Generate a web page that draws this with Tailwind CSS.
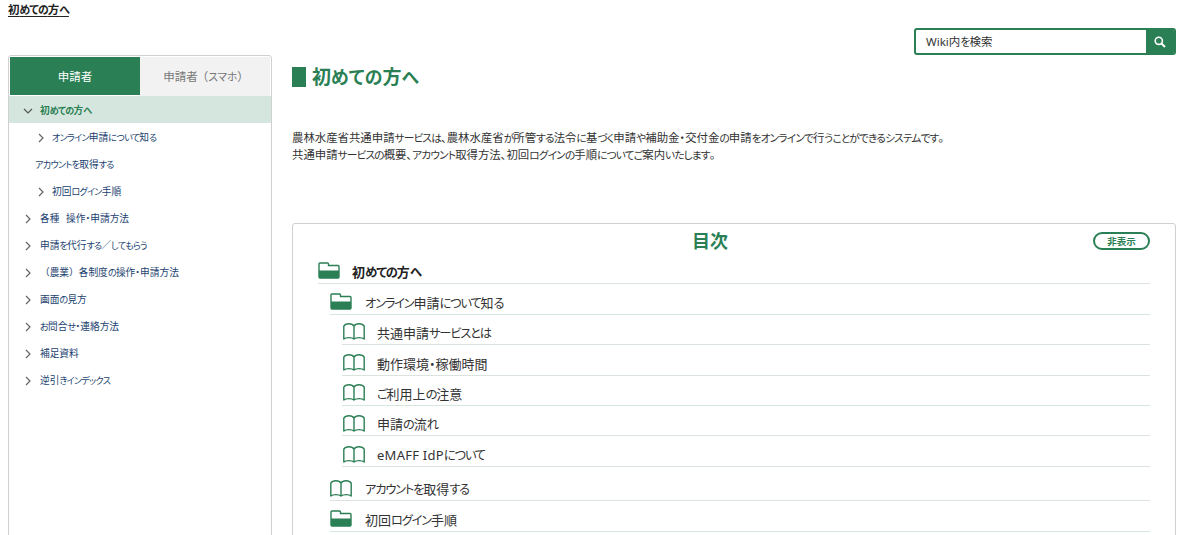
<!DOCTYPE html>
<html lang="ja">

<head>
  <meta charset="UTF-8">
  <meta name="viewport" content="width=device-width, initial-scale=1.0">
  <title>初めての方へ</title>
  <script src="https://cdn.jsdelivr.net/npm/@tailwindcss/browser@4"></script>
</head>

<!-- i = kana run, set smaller and tighter than the kanji -->
<body class="h-[535px] overflow-hidden bg-white font-['Noto_Sans_CJK_JP',sans-serif] text-[#333] [font-feature-settings:'palt'] [&_i]:text-[0.94em] [&_i]:tracking-[-0.08em] [&_i]:not-italic">

  <!-- Icons -->
  <svg class="hidden">
    <symbol id="folder" viewBox="0 0 22 17">
      <path d="M1 15V2a1 1 0 0 1 1-1h7.5a1 1 0 0 1 1 1v1.5H20a1 1 0 0 1 1 1V15a1 1 0 0 1-1 1H2a1 1 0 0 1-1-1z" fill="#fff" stroke="#2a7f54" stroke-width="1.4" />
      <path d="M1 8.500h20V15a1 1 0 0 1-1 1H2a1 1 0 0 1-1-1z" fill="#2a7f54" />
    </symbol>
    <symbol id="book" viewBox="0 0 22 17">
      <path d="M11 3.200C9.300-.1 2.700-.1.8 3.200V16c2.200-1.900 8-1.900 10.200 0c2.200-1.900 8-1.900 10.200 0V3.200C19.300-.1 12.700-.1 11 3.200V16" fill="none" stroke="#2a7f54" stroke-width="1.4" stroke-linejoin="round" />
    </symbol>
    <symbol id="right" viewBox="0 0 6 10">
      <path d="M1 1l4 4-4 4" fill="none" stroke="#666" stroke-width="1.200" />
    </symbol>
  </svg>

  <a class="ml-2 block h-[28px] w-fit text-[11.5px] leading-[19px] font-bold text-[#222] underline underline-offset-2">初<i>めての</i>方<i>へ</i></a>

  <!-- Search -->
  <div class="mr-6 ml-auto flex h-[27px] w-[262px] overflow-hidden rounded-[3px] border-2 border-[#2a7f54]">
    <div class="flex-1 pl-2.5 font-['Noto_Sans','Noto_Sans_CJK_JP',sans-serif] text-[11.5px] leading-[23px]">Wiki内<i>を</i>検索</div>
    <div class="flex w-7 items-center justify-center bg-[#2a7f54]">
      <svg class="size-3" viewBox="0 0 12 12" fill="none" stroke="#fff" stroke-width="1.600">
        <circle cx="4.800" cy="4.800" r="3.600" />
        <path d="M7.500 7.500L11 11" stroke-width="2" />
      </svg>
    </div>
  </div>

  <div class="flex pr-6 pl-2">
    <!-- Side menu -->
    <nav class="h-[500px] w-[264px] shrink-0 rounded-t-[3px] border border-[#d0d0d0] text-[9.7px] leading-[27px] text-[#1b3f70]">
      <div class="flex h-10 p-px pb-0 text-[11.5px] leading-[38px]">
        <div class="h-[38px] w-[130px] bg-[#2a7f54] text-center text-white">申請者</div>
        <div class="flex-1 bg-[#f2f2f2] pr-1.5 text-center whitespace-nowrap text-[#777]">申請者<span class="[font-feature-settings:normal] -ml-px">（</span><i class="tracking-[-0.02em]!">スマホ</i><span class="[font-feature-settings:normal] -mr-2">）</span></div>
      </div>
      <ul class="*:flex *:h-[27px] *:items-center *:pt-0.5">
        <li class="bg-[#d5e6de] pl-3.5 font-bold text-[#2a7f54]">
          <svg class="mr-[7px] h-[6px] w-2.5" viewBox="0 0 10 6"><path d="M1 1l4 4 4-4" fill="none" stroke="#555" stroke-width="1.200" /></svg><span>初<i>めての</i>方<i>へ</i></span>
        </li>
        <li class="pl-[29px]"><svg class="mr-2 h-2.5 w-1.5"><use href="#right" /></svg><span><i>オンライン</i>申請<i>について</i>知<i>る</i></span></li>
        <li class="pl-[26px]"><span><i>アカウントを</i>取得<i>する</i></span></li>
        <li class="pl-[29px]"><svg class="mr-2 h-2.5 w-1.5"><use href="#right" /></svg><span>初回<i>ログイン</i>手順</span></li>
        <li class="pl-4"><svg class="mr-[9px] h-2.5 w-1.5"><use href="#right" /></svg><span>各種<span class="-mr-[3px]">　</span>操作・申請方法</span></li>
        <li class="pl-4"><svg class="mr-[9px] h-2.5 w-1.5"><use href="#right" /></svg><span>申請<i>を</i>代行<i>する</i>／<i>してもらう</i></span></li>
        <li class="pl-4"><svg class="mr-[9px] h-2.5 w-1.5"><use href="#right" /></svg><span class="[font-feature-settings:normal]">（農業）</span><span>各制度<i>の</i>操作・申請方法</span></li>
        <li class="pl-4"><svg class="mr-[9px] h-2.5 w-1.5"><use href="#right" /></svg><span>画面<i>の</i>見方</span></li>
        <li class="pl-4"><svg class="mr-[9px] h-2.5 w-1.5"><use href="#right" /></svg><span><i>お</i>問合<i>せ</i>・連絡方法</span></li>
        <li class="pl-4"><svg class="mr-[9px] h-2.5 w-1.5"><use href="#right" /></svg><span>補足資料</span></li>
        <li class="pl-4"><svg class="mr-[9px] h-2.5 w-1.5"><use href="#right" /></svg><span>逆引<i>きインデックス</i></span></li>
      </ul>
    </nav>

    <main class="ml-5 flex-1 pt-3">
      <h1 class="flex h-5 items-center text-[19px] font-bold text-[#2a7f54] [&_i]:tracking-[0.01em]">
        <span class="mr-1.5 h-5 w-3.5 bg-[#2a7f54]"></span><span class="-mt-0.5">初<i>めての</i>方<i>へ</i></span>
      </h1>
      <p class="mt-[42px] h-[94px] text-[11.4px] leading-[17px] whitespace-nowrap [&_i]:tracking-[-0.1em]">
        <span>農林水産省共通申請<i>サービスは</i>、農林水産省<i>が</i>所管<i>する</i>法令<i>に</i>基<i>づく</i>申請<i>や</i>補助金・交付金<i>の</i>申請<i>をオンラインで</i>行<i>うことができるシステムです</i>。</span><br>
        <span>共通申請<i>サービスの</i>概要、<i>アカウント</i>取得方法、初回<i>ログインの</i>手順<i>についてご</i>案内<i>いたします</i>。</span>
      </p>

      <!-- Table of contents -->
      <section class="h-[330px] rounded-[3px] border border-[#d0d0d0] pr-[25px] pl-[25px]">
        <div class="relative flex h-[29px] items-center justify-center pt-1">
          <h2 class="mr-12 text-[18px] font-bold text-[#2a7f54]">目次</h2>
          <button class="absolute top-2 right-0 h-[18px] w-[57px] rounded-full border-2 border-[#2a7f54] text-[9.5px] leading-[13px] font-bold text-[#2a7f54]">非表示</button>
        </div>
        <ul class="text-[13px] leading-[20px] *:flex *:items-end *:border-b [&_i]:tracking-[-0.095em] [&_span]:mb-px">
          <li class="h-[31px] border-[#dbe3df] font-bold text-[#222]"><svg class="mr-3 mb-1 h-[17px] w-[22px]"><use href="#folder" /></svg><span class="tracking-[0.02em]">初<i>めての</i>方<i>へ</i></span></li>
          <li class="ml-3 h-[31px] border-[#d5e6de]"><svg class="mr-[13px] mb-1 h-[17px] w-[22px]"><use href="#folder" /></svg><span><i>オンライン</i>申請<i>について</i>知<i>る</i></span></li>
          <li class="ml-6 h-[30px] border-[#dbe3df]"><svg class="mr-[12.5px] mb-1 ml-[0.5px] h-[17px] w-[22px]"><use href="#book" /></svg><span>共通申請<i>サービスとは</i></span></li>
          <li class="ml-6 h-[31px] border-[#dbe3df]"><svg class="mr-[12.5px] mb-1 ml-[0.5px] h-[17px] w-[22px]"><use href="#book" /></svg><span>動作環境・稼働時間</span></li>
          <li class="ml-6 h-[30px] border-[#d5e6de]"><svg class="mr-[12.5px] mb-1 ml-[0.5px] h-[17px] w-[22px]"><use href="#book" /></svg><span><i>ご</i>利用上<i>の</i>注意</span></li>
          <li class="ml-6 h-[30px] border-[#dbe3df]"><svg class="mr-[12.5px] mb-[3px] ml-[0.5px] h-[17px] w-[22px]"><use href="#book" /></svg><span>申請<i>の</i>流<i>れ</i></span></li>
          <li class="ml-6 h-[31px] border-[#dbe3df]"><svg class="mr-[12.5px] mb-[3px] ml-[0.5px] h-[17px] w-[22px]"><use href="#book" /></svg><span><b class="font-['Noto_Sans'] font-normal tracking-[0.02em]">eMAFF IdP</b><i>について</i></span></li>
          <li class="ml-3 h-[34px] border-[#dbe3df]"><svg class="mr-[13px] mb-[3px] h-[17px] w-[22px]"><use href="#book" /></svg><span><i>アカウントを</i>取得<i>する</i></span></li>
          <li class="ml-3 h-[31px] border-[#d5e6de]"><svg class="mr-[13px] mb-1 h-[17px] w-[22px]"><use href="#folder" /></svg><span>初回<i>ログイン</i>手順</span></li>
        </ul>
      </section>
    </main>
  </div>
</body>

</html>
